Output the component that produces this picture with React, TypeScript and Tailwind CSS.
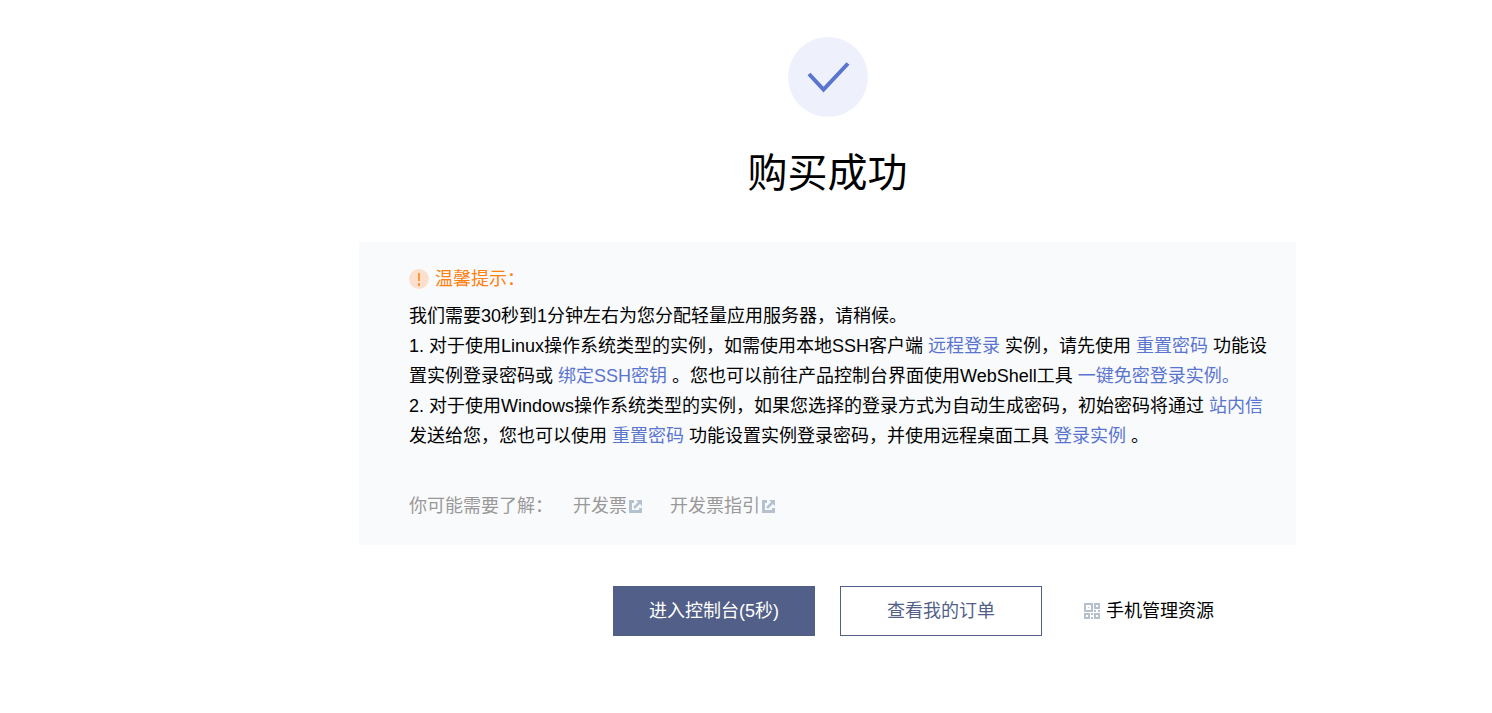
import React from 'react';

const SuccessIcon = () => (
  <svg className="w-20 h-20" viewBox="0 0 80 80" fill="none" aria-hidden="true">
    <circle cx="40" cy="40" r="40" fill="#eef1fb" />
    <path d="M21 37 L35.5 52.5 L60 26.5" stroke="#5a75d0" strokeWidth="4" />
  </svg>
);

const WarningIcon = () => (
  <svg className="w-5 h-5" viewBox="0 0 20 20" aria-hidden="true">
    <circle cx="10" cy="10" r="10" fill="#fbe1cd" />
    <path d="M9 4h2v8h-2z M9 14h2v3h-2z" fill="#ff9640" />
  </svg>
);

const ExternalIcon = () => (
  <svg className="w-[13px] h-[13px]" viewBox="0 0 13 13" fill="none" stroke="#b6c1d0" aria-hidden="true">
    <path d="M5 1.5H1.5V11.5H11.5V8" strokeWidth="3" />
    <path d="M5 8L10.5 2.5" strokeWidth="2.5" />
    <path d="M7 0H13V6Z" fill="#b6c1d0" stroke="none" />
  </svg>
);

const QrIcon = () => (
  <svg className="w-4 h-4" viewBox="0 0 16 16" fill="#b6c1d0" aria-hidden="true">
    <path
      fillRule="evenodd"
      d="M0 0h9v9H0z M2 2v5h5V2z M10 0h6v6h-6z M12 2v2h2V2z M0 10h6v6H0z M2 12v2h2v-2z M10 10h6v6h-6z M12 12v2h2v-2z"
    />
    <path d="M4 4h1v1H4z M10 7h2v2h-2z M14 7h2v2h-2z M7 10h2v2H7z M7 14h2v2H7z" />
  </svg>
);

const TextLink = ({ children }: { children: React.ReactNode }) => (
  <a href="#" className="text-[#5a75d0] hover:underline">
    {children}
  </a>
);

const App: React.FC = () => {
  const helpLinks = ['开发票', '开发票指引'];

  return (
    <main
      lang="zh-CN"
      className="min-h-screen bg-white pl-[163px] pt-[37px] pb-16 font-['Liberation_Sans','Noto_Sans_CJK_SC',sans-serif] text-[18px] leading-[30px] text-black"
    >
      <div className="max-w-[937px] mx-auto">
        <header className="flex flex-col items-center">
          <SuccessIcon />
          <h1 className="mt-[26px] text-[40px] leading-[60px]">购买成功</h1>
        </header>

        <section className="mt-[39px] bg-[#f9fafc] pl-[50px] pr-7 pt-[22px] pb-6">
          <h2 className="flex items-center gap-[6px] text-[#ff7f0f]">
            <WarningIcon />
            温馨提示：
          </h2>
          <div className="mt-[7px]">
            <p>我们需要30秒到1分钟左右为您分配轻量应用服务器，请稍候。</p>
            <p>
              1. 对于使用Linux操作系统类型的实例，如需使用本地SSH客户端 <TextLink>远程登录</TextLink> 实例，请先使用{' '}
              <TextLink>重置密码</TextLink> 功能设置实例登录密码或 <TextLink>绑定SSH密钥</TextLink>{' '}
              。您也可以前往产品控制台界面使用WebShell工具 <TextLink>一键免密登录实例。</TextLink>
            </p>
            <p>
              2. 对于使用Windows操作系统类型的实例，如果您选择的登录方式为自动生成密码，初始密码将通过{' '}
              <TextLink>站内信</TextLink> 发送给您，您也可以使用 <TextLink>重置密码</TextLink>{' '}
              功能设置实例登录密码，并使用远程桌面工具 <TextLink>登录实例</TextLink> 。
            </p>
          </div>
          <div className="mt-10 flex items-center gap-5 text-[#999999]">
            <span>你可能需要了解：</span>
            <nav className="flex gap-7">
              {helpLinks.map((label) => (
                <a key={label} href="#" className="flex items-center gap-[2px]">
                  {label}
                  <ExternalIcon />
                </a>
              ))}
            </nav>
          </div>
        </section>

        <div className="mt-[41px] grid grid-cols-[1fr_auto_1fr] items-center">
          <div className="col-start-2 flex gap-[25px]">
            <button type="button" className="w-[202px] h-[50px] bg-[#525f88] text-white">
              进入控制台(5秒)
            </button>
            <button type="button" className="w-[202px] h-[50px] border border-[#525f88] text-[#525f88]">
              查看我的订单
            </button>
          </div>
          <a href="#" className="ml-[42px] flex items-center gap-[6px]">
            <QrIcon />
            手机管理资源
          </a>
        </div>
      </div>
    </main>
  );
};

export default App;
